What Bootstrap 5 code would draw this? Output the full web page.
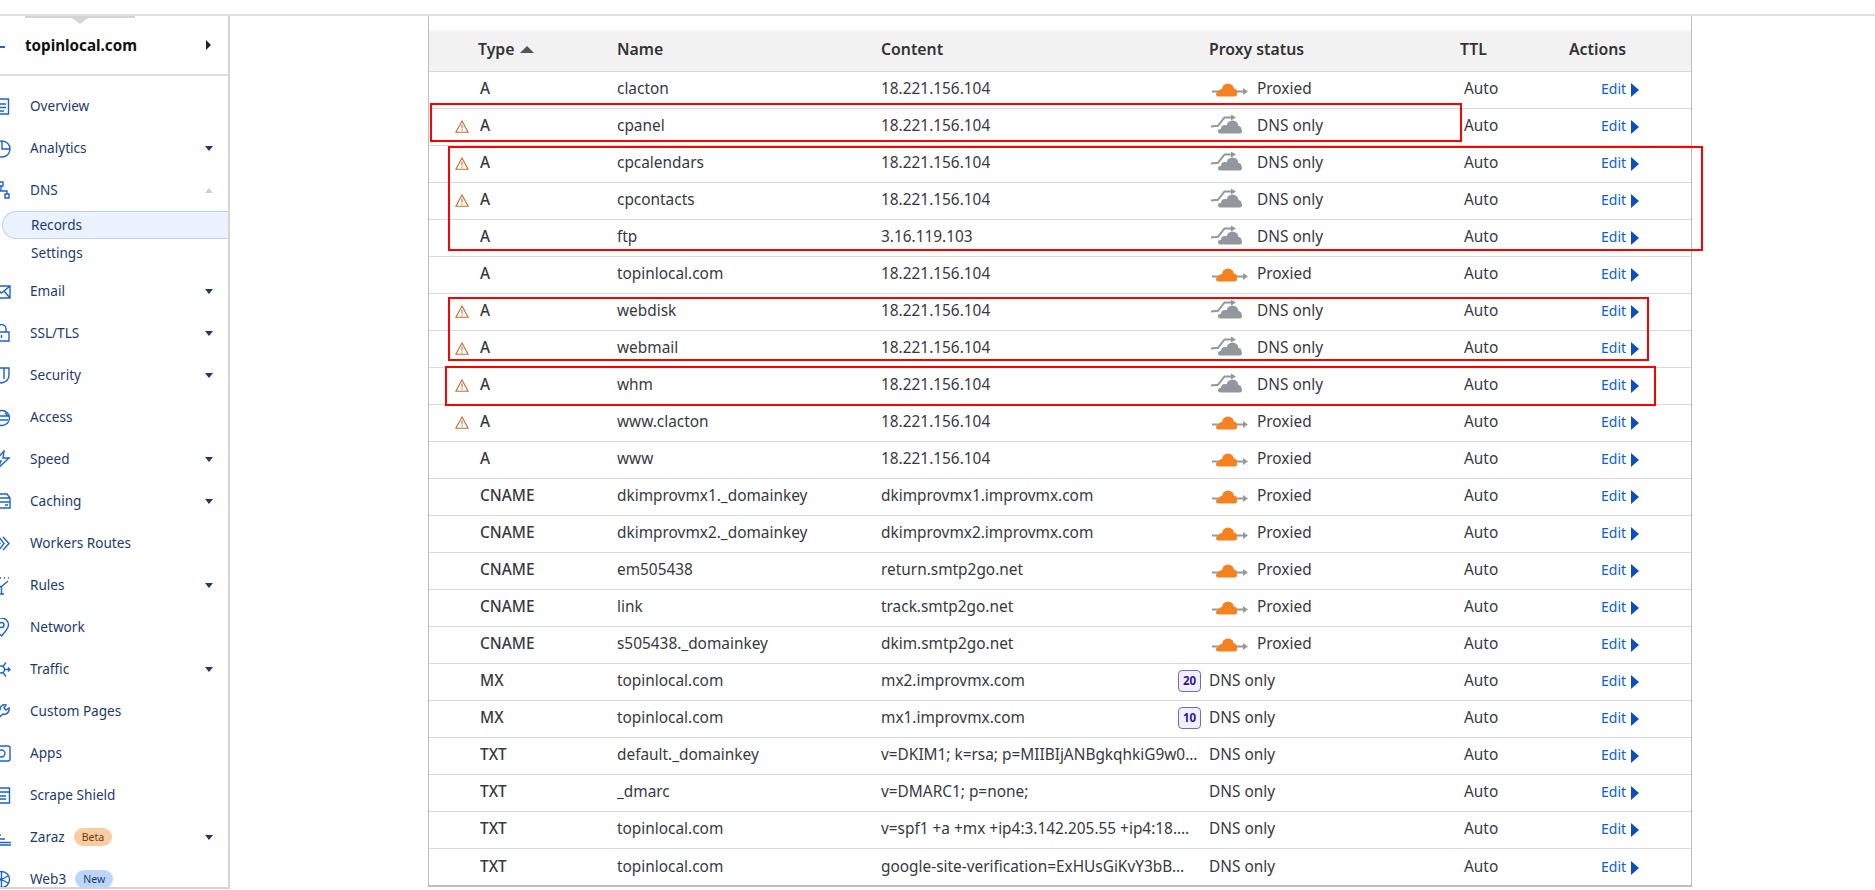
<!DOCTYPE html>
<html lang="en">
<head>
    <meta charset="UTF-8">
    <meta name="viewport" content="width=device-width, initial-scale=1.0">
    <title>DNS Records - topinlocal.com</title>
    <link href="https://cdn.jsdelivr.net/npm/bootstrap@5.3.2/dist/css/bootstrap.min.css" rel="stylesheet">
    <style>
        :root {
            --side-text: #1d3a6e;
            --side-blue: #1a62d6;
            --row-line: #d9d9d9;
            --cell-text: #36393f;
        }

        body {
            margin: 0;
            height: 890px;
            overflow: hidden;
            background: #fff;
            font-family: "Noto Sans", "Open Sans", sans-serif;
            color: var(--cell-text);
            position: relative;
        }

        .top-strip {
            height: 16px;
            border-bottom: 2px solid #e0e0e0;
        }

        .page-main {
            height: 874px;
        }

        /* Sidebar */
        .side-bar {
            width: 230px;
            height: 873px;
            border-right: 2px solid #d5d5d5;
            border-bottom: 2px solid #d5d5d5;
            overflow: hidden;
            position: relative;
            flex: none;
            color: var(--side-text);
            font-size: 13.6px;
        }

        .zone-tab {
            position: absolute;
            left: 25px;
            top: 0;
            width: 110px;
            height: 2px;
            background: #d5d5d5;
        }

        .zone-tab::after {
            content: "";
            position: absolute;
            left: 47px;
            top: 2px;
            border-left: 8px solid transparent;
            border-right: 8px solid transparent;
            border-top: 6px solid #d5d5d5;
        }

        .zone-head {
            height: 60px;
            border-bottom: 2px solid #dedede;
            padding-left: 25px;
            padding-right: 17px;
            margin-bottom: 9px;
            position: relative;
            color: #111;
            font-weight: 700;
            font-size: 15.2px;
        }

        .zone-head::before {
            content: "";
            position: absolute;
            left: 0;
            top: 30px;
            width: 5px;
            height: 2px;
            background: var(--side-blue);
        }

        .caret-right {
            border-top: 5px solid transparent;
            border-bottom: 5px solid transparent;
            border-left: 5px solid #222;
        }

        .side-row {
            height: 42px;
            padding-right: 15px;
        }

        .side-ico {
            width: 19px;
            height: 19px;
            margin-left: -8px;
            margin-right: 19px;
            flex: none;
            fill: none;
            stroke: var(--side-blue);
            stroke-width: 1.4;
        }

        .caret-down {
            margin-left: auto;
            border-left: 4px solid transparent;
            border-right: 4px solid transparent;
            border-top: 5px solid var(--side-text);
        }

        .caret-up {
            margin-left: auto;
            border-left: 4px solid transparent;
            border-right: 4px solid transparent;
            border-bottom: 5px solid #c6d0de;
        }

        .side-sub {
            height: 28px;
            margin-left: 2px;
            padding-left: 28px;
            border: 1px solid transparent;
            border-right: 0;
            border-radius: 14px 0 0 14px;
        }

        .side-sub-on {
            background: #e9f2fe;
            border-color: #b9d4f8;
        }

        .side-sub-gap {
            margin-bottom: 3px;
        }

        .pill-note {
            font-size: 10.5px;
            line-height: 18px;
            height: 18px;
            padding: 0 8px;
            border-radius: 9px;
            margin-left: 9px;
        }

        .pill-beta {
            background: #f9cda1;
            color: #6b3a15;
        }

        .pill-new {
            background: #bcd6fb;
            color: #1d3a6e;
        }

        /* Records table */
        .records-wrap {
            width: 1264px;
            height: 871px;
            margin-left: 198px;
            border-left: 1px solid #bdbdbd;
            border-right: 1px solid #bdbdbd;
            border-bottom: 2px solid #bdbdbd;
            padding-top: 14px;
            flex: none;
        }

        .records-table {
            table-layout: fixed;
            width: 100%;
            margin: 0;
            font-size: 15.4px;
        }

        .records-table th,
        .records-table td {
            height: 37px;
            padding: 0 0 1px 0;
            vertical-align: middle;
            border-bottom: 1px solid var(--row-line);
            color: var(--cell-text);
            box-shadow: none;
        }

        .records-table th {
            height: 41px;
            padding: 0;
            background: #f2f2f2;
            font-weight: 600;
            font-size: 15.8px;
            color: #333;
        }

        .records-table tr:last-child td {
            border-bottom: 0;
        }

        .sort-up {
            display: inline-block;
            border-left: 7px solid transparent;
            border-right: 7px solid transparent;
            border-bottom: 7px solid #555;
            margin-left: 1px;
            vertical-align: 2px;
        }

        .warn-cell {
            text-align: right;
            padding-right: 9px !important;
        }

        .warn-ico {
            width: 14px;
            height: 13px;
            display: block;
            margin-left: auto;
        }

        .type-cell {
            padding-left: 2px !important;
            font-weight: 500;
        }

        .ttl-cell {
            padding-left: 4px !important;
        }

        .edit-cell {
            padding-left: 32px !important;
        }

        .edit-cell a {
            color: #0a5fd6;
            text-decoration: none;
            font-size: 14px;
        }

        .edit-cell a::after {
            content: "";
            display: inline-block;
            border-top: 7px solid transparent;
            border-bottom: 7px solid transparent;
            border-left: 8px solid #0a4fc0;
            margin-left: 5px;
            vertical-align: -3px;
        }

        .cloud-ico {
            width: 38px;
            height: 24px;
            margin-left: 1px;
            margin-right: 9px;
            flex: none;
        }

        .prio-tag {
            width: 23px;
            height: 22px;
            line-height: 20px;
            border: 1px solid #7466d8;
            border-radius: 4px;
            background: #f1effd;
            color: #2c1a8a;
            font-size: 11.5px;
            font-weight: 700;
            text-align: center;
            flex: none;
            margin-right: 8px;
        }

        /* Hand drawn review marks lying over the table */
        .red-mark {
            position: absolute;
            border: 2px solid #f00;
            pointer-events: none;
        }
        .mark-a { left: 430px; top: 103px; width: 1032px; height: 39px; }
        .mark-b { left: 448px; top: 146px; width: 1255px; height: 105px; }
        .mark-c { left: 448px; top: 297px; width: 1201px; height: 64px; }
        .mark-d { left: 445px; top: 366px; width: 1211px; height: 40px; }
    </style>
</head>
<body>

    <svg class="d-none">
        <symbol id="cloudOn" viewBox="0 0 38 24">
            <path d="M2 14.500h33" stroke="#9a9a9a" stroke-width="2" fill="none"/>
            <path d="M33 11l5 3.500-5 3.500z" fill="#9a9a9a"/>
            <g fill="#f6821f">
                <circle cx="18" cy="12.500" r="6"/>
                <circle cx="12" cy="15.500" r="3.500"/>
                <circle cx="23.500" cy="15" r="3.500"/>
                <rect x="6" y="15" width="21" height="4.500" rx="2.200"/>
            </g>
        </symbol>
        <symbol id="cloudOff" viewBox="0 0 38 24">
            <g fill="#92979e">
                <circle cx="22.500" cy="12.500" r="6"/>
                <circle cx="15" cy="15" r="4"/>
                <circle cx="28" cy="15.500" r="3.500"/>
                <rect x="8" y="15" width="24" height="4.500" rx="2.200"/>
            </g>
            <path d="M1 12.500l7-.7 6.500-8.300h8" stroke="#92979e" stroke-width="2" fill="none"/>
            <path d="M21 .5l5 3-5 3z" fill="#92979e"/>
        </symbol>
        <symbol id="warnIco" viewBox="0 0 14 13">
            <path d="M7 1L.9 12.200h12.200z" fill="none" stroke="#c8692a" stroke-width="1.100"/>
            <path d="M7 4.500v4M7 9.500v1.200" stroke="#c8692a" stroke-width="1.100"/>
        </symbol>
    </svg>

    <div class="top-strip"></div>

    <div class="page-main d-flex">
        <nav class="side-bar">
            <div class="zone-tab"></div>
            <div class="zone-head d-flex align-items-center justify-content-between">
                <span>topinlocal.com</span>
                <span class="caret-right"></span>
            </div>

            <div class="side-row d-flex align-items-center">
                <svg class="side-ico" viewBox="0 0 19 19"><path d="M1 2h15.500v15H1zM5 2V1M4 7h10M4 10.500h10M4 14h8"/></svg>
                <span>Overview</span>
            </div>
            <div class="side-row d-flex align-items-center">
                <svg class="side-ico" viewBox="0 0 19 19"><circle cx="10" cy="10" r="8"/><path d="M10 2v8h8"/></svg>
                <span>Analytics</span><span class="caret-down"></span>
            </div>
            <div class="side-row d-flex align-items-center">
                <svg class="side-ico" viewBox="0 0 19 19"><path d="M7 1h4v4H7zM3 13h4v4H3zM13 13h4v4h-4zM9 5v5M5 13v-3h10v3"/></svg>
                <span>DNS</span><span class="caret-up"></span>
            </div>
            <div class="side-sub side-sub-on d-flex align-items-center"><span>Records</span></div>
            <div class="side-sub side-sub-gap d-flex align-items-center"><span>Settings</span></div>
            <div class="side-row d-flex align-items-center">
                <svg class="side-ico" viewBox="0 0 19 19"><path d="M1 4h17v12H1zM1 4l8.500 7L18 4M1 16l6-7M18 16l-6-7"/></svg>
                <span>Email</span><span class="caret-down"></span>
            </div>
            <div class="side-row d-flex align-items-center">
                <svg class="side-ico" viewBox="0 0 19 19"><path d="M2 8h15v9H2zM5 8V5a4.500 4.500 0 0 1 9 0v3M9.500 11v3"/></svg>
                <span>SSL/TLS</span><span class="caret-down"></span>
            </div>
            <div class="side-row d-flex align-items-center">
                <svg class="side-ico" viewBox="0 0 19 19"><path d="M2 2h15v7c0 4-3 7-7.500 8C5 16 2 13 2 9zM12 2v11"/></svg>
                <span>Security</span><span class="caret-down"></span>
            </div>
            <div class="side-row d-flex align-items-center">
                <svg class="side-ico" viewBox="0 0 19 19"><circle cx="10" cy="10" r="7.500"/><path d="M3 8h13l-3-3M16 12H4l3 3"/></svg>
                <span>Access</span>
            </div>
            <div class="side-row d-flex align-items-center">
                <svg class="side-ico" viewBox="0 0 19 19"><path d="M12 1L3 11h6l-3 7 11-10h-6z"/></svg>
                <span>Speed</span><span class="caret-down"></span>
            </div>
            <div class="side-row d-flex align-items-center">
                <svg class="side-ico" viewBox="0 0 19 19"><path d="M2 6l2-4h11l3 4v4H2zM2 10h16v6H2zM2 6h16M13 13h3"/></svg>
                <span>Caching</span><span class="caret-down"></span>
            </div>
            <div class="side-row d-flex align-items-center">
                <svg class="side-ico" viewBox="0 0 19 19"><path d="M3 3l5 6.500L3 16M7 3l5 6.500L7 16M11 3l6 6.500L11 16"/></svg>
                <span>Workers Routes</span>
            </div>
            <div class="side-row d-flex align-items-center">
                <svg class="side-ico" viewBox="0 0 19 19"><path d="M2 5l7 6 7-6M9.500 11v7M7 18h5M4 2h1M8 2h1M12 2h1M16 2h1"/></svg>
                <span>Rules</span><span class="caret-down"></span>
            </div>
            <div class="side-row d-flex align-items-center">
                <svg class="side-ico" viewBox="0 0 19 19"><path d="M9.500 18C5 13 2.500 10 2.500 7a7 7 0 0 1 14 0c0 3-2.500 6-7 11z"/><circle cx="9.500" cy="7" r="2.500"/></svg>
                <span>Network</span>
            </div>
            <div class="side-row d-flex align-items-center">
                <svg class="side-ico" viewBox="0 0 19 19"><circle cx="9" cy="9.500" r="3.500"/><path d="M12.500 9.500H18M16 7.500l2 2-2 2M11 6.500l3-4M11 12.500l3 4M2 5l4 3M2 14l4-3"/></svg>
                <span>Traffic</span><span class="caret-down"></span>
            </div>
            <div class="side-row d-flex align-items-center">
                <svg class="side-ico" viewBox="0 0 19 19"><path d="M1 13l7-5c0-3 2-6 6-5l-2 3 2 2 3-2c1 4-3 7-6 6l-6 5z"/></svg>
                <span>Custom Pages</span>
            </div>
            <div class="side-row d-flex align-items-center">
                <svg class="side-ico" viewBox="0 0 19 19"><rect x="1" y="2" width="17" height="15" rx="2"/><circle cx="9.500" cy="9.500" r="3.500"/></svg>
                <span>Apps</span>
            </div>
            <div class="side-row d-flex align-items-center">
                <svg class="side-ico" viewBox="0 0 19 19"><path d="M1 2h16.500v15H1zM1 6h16.500M5 10h9M1 13h13"/></svg>
                <span>Scrape Shield</span>
            </div>
            <div class="side-row d-flex align-items-center">
                <svg class="side-ico" viewBox="0 0 19 19"><path d="M2 3h3M2 7h7M2 11h11M2 14.500h17M2 17h17"/></svg>
                <span>Zaraz</span><span class="pill-note pill-beta">Beta</span><span class="caret-down"></span>
            </div>
            <div class="side-row d-flex align-items-center">
                <svg class="side-ico" viewBox="0 0 19 19"><circle cx="9.500" cy="9.500" r="8"/><path d="M9.500 2v15M3 6l13 7M3 13l13-7"/></svg>
                <span>Web3</span><span class="pill-note pill-new">New</span>
            </div>
        </nav>

        <section class="records-wrap">
            <table class="table records-table">
                <colgroup>
                    <col style="width:49px"><col style="width:139px"><col style="width:264px"><col style="width:328px"><col style="width:251px"><col style="width:109px"><col>
                </colgroup>
                <thead>
                    <tr>
                        <th></th>
                        <th>Type <span class="sort-up"></span></th>
                        <th>Name</th>
                        <th>Content</th>
                        <th>Proxy status</th>
                        <th>TTL</th>
                        <th>Actions</th>
                    </tr>
                </thead>
                <tbody>
                    <tr><td></td><td class="type-cell">A</td><td>clacton</td><td>18.221.156.104</td><td><div class="d-flex align-items-center"><svg class="cloud-ico"><use href="#cloudOn"/></svg>Proxied</div></td><td class="ttl-cell">Auto</td><td class="edit-cell"><a href="#">Edit</a></td></tr>
                    <tr><td class="warn-cell"><svg class="warn-ico"><use href="#warnIco"/></svg></td><td class="type-cell">A</td><td>cpanel</td><td>18.221.156.104</td><td><div class="d-flex align-items-center"><svg class="cloud-ico"><use href="#cloudOff"/></svg>DNS only</div></td><td class="ttl-cell">Auto</td><td class="edit-cell"><a href="#">Edit</a></td></tr>
                    <tr><td class="warn-cell"><svg class="warn-ico"><use href="#warnIco"/></svg></td><td class="type-cell">A</td><td>cpcalendars</td><td>18.221.156.104</td><td><div class="d-flex align-items-center"><svg class="cloud-ico"><use href="#cloudOff"/></svg>DNS only</div></td><td class="ttl-cell">Auto</td><td class="edit-cell"><a href="#">Edit</a></td></tr>
                    <tr><td class="warn-cell"><svg class="warn-ico"><use href="#warnIco"/></svg></td><td class="type-cell">A</td><td>cpcontacts</td><td>18.221.156.104</td><td><div class="d-flex align-items-center"><svg class="cloud-ico"><use href="#cloudOff"/></svg>DNS only</div></td><td class="ttl-cell">Auto</td><td class="edit-cell"><a href="#">Edit</a></td></tr>
                    <tr><td></td><td class="type-cell">A</td><td>ftp</td><td>3.16.119.103</td><td><div class="d-flex align-items-center"><svg class="cloud-ico"><use href="#cloudOff"/></svg>DNS only</div></td><td class="ttl-cell">Auto</td><td class="edit-cell"><a href="#">Edit</a></td></tr>
                    <tr><td></td><td class="type-cell">A</td><td>topinlocal.com</td><td>18.221.156.104</td><td><div class="d-flex align-items-center"><svg class="cloud-ico"><use href="#cloudOn"/></svg>Proxied</div></td><td class="ttl-cell">Auto</td><td class="edit-cell"><a href="#">Edit</a></td></tr>
                    <tr><td class="warn-cell"><svg class="warn-ico"><use href="#warnIco"/></svg></td><td class="type-cell">A</td><td>webdisk</td><td>18.221.156.104</td><td><div class="d-flex align-items-center"><svg class="cloud-ico"><use href="#cloudOff"/></svg>DNS only</div></td><td class="ttl-cell">Auto</td><td class="edit-cell"><a href="#">Edit</a></td></tr>
                    <tr><td class="warn-cell"><svg class="warn-ico"><use href="#warnIco"/></svg></td><td class="type-cell">A</td><td>webmail</td><td>18.221.156.104</td><td><div class="d-flex align-items-center"><svg class="cloud-ico"><use href="#cloudOff"/></svg>DNS only</div></td><td class="ttl-cell">Auto</td><td class="edit-cell"><a href="#">Edit</a></td></tr>
                    <tr><td class="warn-cell"><svg class="warn-ico"><use href="#warnIco"/></svg></td><td class="type-cell">A</td><td>whm</td><td>18.221.156.104</td><td><div class="d-flex align-items-center"><svg class="cloud-ico"><use href="#cloudOff"/></svg>DNS only</div></td><td class="ttl-cell">Auto</td><td class="edit-cell"><a href="#">Edit</a></td></tr>
                    <tr><td class="warn-cell"><svg class="warn-ico"><use href="#warnIco"/></svg></td><td class="type-cell">A</td><td>www.clacton</td><td>18.221.156.104</td><td><div class="d-flex align-items-center"><svg class="cloud-ico"><use href="#cloudOn"/></svg>Proxied</div></td><td class="ttl-cell">Auto</td><td class="edit-cell"><a href="#">Edit</a></td></tr>
                    <tr><td></td><td class="type-cell">A</td><td>www</td><td>18.221.156.104</td><td><div class="d-flex align-items-center"><svg class="cloud-ico"><use href="#cloudOn"/></svg>Proxied</div></td><td class="ttl-cell">Auto</td><td class="edit-cell"><a href="#">Edit</a></td></tr>
                    <tr><td></td><td class="type-cell">CNAME</td><td>dkimprovmx1._domainkey</td><td>dkimprovmx1.improvmx.com</td><td><div class="d-flex align-items-center"><svg class="cloud-ico"><use href="#cloudOn"/></svg>Proxied</div></td><td class="ttl-cell">Auto</td><td class="edit-cell"><a href="#">Edit</a></td></tr>
                    <tr><td></td><td class="type-cell">CNAME</td><td>dkimprovmx2._domainkey</td><td>dkimprovmx2.improvmx.com</td><td><div class="d-flex align-items-center"><svg class="cloud-ico"><use href="#cloudOn"/></svg>Proxied</div></td><td class="ttl-cell">Auto</td><td class="edit-cell"><a href="#">Edit</a></td></tr>
                    <tr><td></td><td class="type-cell">CNAME</td><td>em505438</td><td>return.smtp2go.net</td><td><div class="d-flex align-items-center"><svg class="cloud-ico"><use href="#cloudOn"/></svg>Proxied</div></td><td class="ttl-cell">Auto</td><td class="edit-cell"><a href="#">Edit</a></td></tr>
                    <tr><td></td><td class="type-cell">CNAME</td><td>link</td><td>track.smtp2go.net</td><td><div class="d-flex align-items-center"><svg class="cloud-ico"><use href="#cloudOn"/></svg>Proxied</div></td><td class="ttl-cell">Auto</td><td class="edit-cell"><a href="#">Edit</a></td></tr>
                    <tr><td></td><td class="type-cell">CNAME</td><td>s505438._domainkey</td><td>dkim.smtp2go.net</td><td><div class="d-flex align-items-center"><svg class="cloud-ico"><use href="#cloudOn"/></svg>Proxied</div></td><td class="ttl-cell">Auto</td><td class="edit-cell"><a href="#">Edit</a></td></tr>
                    <tr><td></td><td class="type-cell">MX</td><td>topinlocal.com</td><td><div class="d-flex align-items-center justify-content-between">mx2.improvmx.com<span class="prio-tag">20</span></div></td><td>DNS only</td><td class="ttl-cell">Auto</td><td class="edit-cell"><a href="#">Edit</a></td></tr>
                    <tr><td></td><td class="type-cell">MX</td><td>topinlocal.com</td><td><div class="d-flex align-items-center justify-content-between">mx1.improvmx.com<span class="prio-tag">10</span></div></td><td>DNS only</td><td class="ttl-cell">Auto</td><td class="edit-cell"><a href="#">Edit</a></td></tr>
                    <tr><td></td><td class="type-cell">TXT</td><td>default._domainkey</td><td>v=DKIM1; k=rsa; p=MIIBIjANBgkqhkiG9w0…</td><td>DNS only</td><td class="ttl-cell">Auto</td><td class="edit-cell"><a href="#">Edit</a></td></tr>
                    <tr><td></td><td class="type-cell">TXT</td><td>_dmarc</td><td>v=DMARC1; p=none;</td><td>DNS only</td><td class="ttl-cell">Auto</td><td class="edit-cell"><a href="#">Edit</a></td></tr>
                    <tr><td></td><td class="type-cell">TXT</td><td>topinlocal.com</td><td>v=spf1 +a +mx +ip4:3.142.205.55 +ip4:18.…</td><td>DNS only</td><td class="ttl-cell">Auto</td><td class="edit-cell"><a href="#">Edit</a></td></tr>
                    <tr><td></td><td class="type-cell">TXT</td><td>topinlocal.com</td><td>google-site-verification=ExHUsGiKvY3bB…</td><td>DNS only</td><td class="ttl-cell">Auto</td><td class="edit-cell"><a href="#">Edit</a></td></tr>
                </tbody>
            </table>
        </section>
    </div>

    <div class="red-mark mark-a"></div>
    <div class="red-mark mark-b"></div>
    <div class="red-mark mark-c"></div>
    <div class="red-mark mark-d"></div>

    <script src="https://cdn.jsdelivr.net/npm/bootstrap@5.3.2/dist/js/bootstrap.bundle.min.js"></script>
</body>
</html>
